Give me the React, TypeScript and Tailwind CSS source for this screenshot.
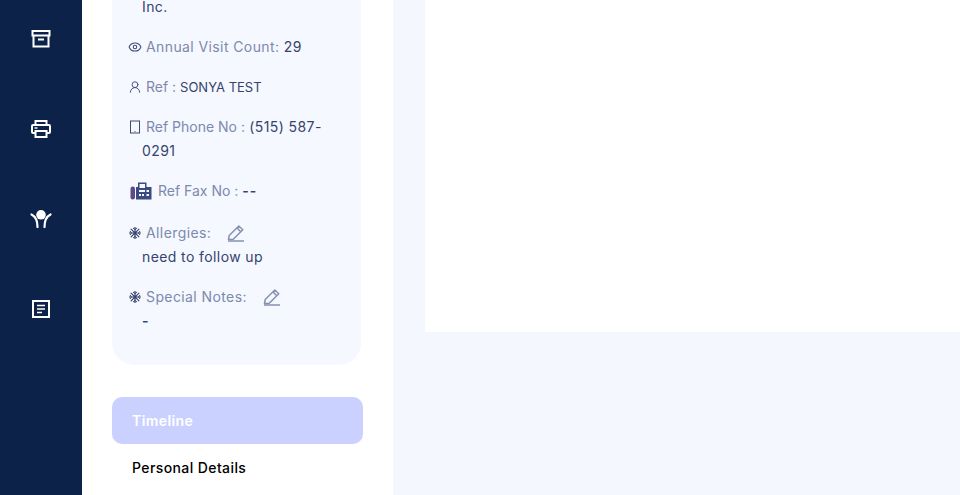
import { Eye, UserRound } from 'lucide-react';
import type { ReactNode } from 'react';

function ArchiveIcon() {
  return (
    <svg width="20" height="18" viewBox="0 0 20 18" fill="none" stroke="#fff" strokeWidth="2">
      <rect x="1.5" y="1" width="17" height="4.5" />
      <path d="M2.5 5.5V16.5H17.5V5.5" />
      <path d="M7 9.5H13" />
    </svg>
  );
}

function PrinterIcon() {
  return (
    <svg width="20" height="18" viewBox="0 0 20 18" fill="none" stroke="#fff" strokeWidth="2">
      <path d="M4.5 5V1H15.5V5" />
      <path d="M5 13H2C1.4 13 1 12.6 1 12V6C1 5.4 1.4 5 2 5H18C18.6 5 19 5.4 19 6V12C19 12.6 18.6 13 18 13H15" />
      <path d="M4.5 11H15.5V17H4.5Z" />
      <path d="M3.5 8H6.5" strokeWidth="1.4" />
    </svg>
  );
}

function PersonIcon() {
  return (
    <svg width="22" height="18" viewBox="0 0 22 18" fill="none" stroke="#fff" strokeWidth="2.2" strokeLinecap="round">
      <circle cx="11" cy="4.8" r="4.8" fill="#fff" stroke="none" />
      <path d="M1.5 4.5C4.5 6 7.5 9 7.5 17" />
      <path d="M20.5 4.5C17.5 6 14.5 9 14.5 17" />
    </svg>
  );
}

function DocIcon() {
  return (
    <svg width="18" height="18" viewBox="0 0 18 18" fill="none" stroke="#fff" strokeWidth="2">
      <rect x="1" y="1" width="16" height="16" />
      <path d="M5 5.5H13M5 9H13M5 12.5H10" strokeWidth="1.7" />
    </svg>
  );
}

function PhoneIcon() {
  return (
    <svg width="14" height="14" viewBox="0 0 14 14" fill="none" stroke="#3d4a73" strokeWidth="1">
      <rect x="2.5" y="1" width="9" height="12" />
      <path d="M6.5 11.5H7.5" stroke="#8a4a5a" />
    </svg>
  );
}

function FaxIcon() {
  return (
    <svg width="22" height="18" viewBox="0 0 22 18">
      <rect x="0.5" y="4.5" width="4.5" height="13" rx="2.2" fill="#5b4a8c" />
      <path d="M6 5H8V0.5H16.5V5H21.5V17.5H6Z" fill="#3b4a80" />
      <path d="M9.5 2H15V6H9.5Z" fill="#f5f8ff" />
      <path d="M9 8H15V10H9ZM16.5 8H19V10H16.5ZM9 12H11V14H9ZM12 12H14V14H12ZM16.5 12H19V14H16.5Z" fill="#f5f8ff" />
    </svg>
  );
}

function FlakeIcon() {
  return (
    <svg width="14" height="14" viewBox="0 0 14 14" fill="none" stroke="#35436e" strokeWidth="1.2">
      <path d="M7 1V13M1 7H13M2.8 2.8L11.2 11.2M11.2 2.8L2.8 11.2" />
      <path d="M5 2L7 3.5L9 2M5 12L7 10.5L9 12M2 5L3.5 7L2 9M12 5L10.5 7L12 9" strokeWidth="1" />
    </svg>
  );
}

function PencilIcon() {
  return (
    <svg width="18" height="17" viewBox="0 0 18 17" fill="none" stroke="#8791b0" strokeWidth="1.5" strokeLinejoin="round">
      <path d="M1.5 14.5L2.2 10.5L11.8 1L15.8 4.8L6 14.5Z" />
      <path d="M10 3L13.8 6.8" />
      <path d="M1 16H17" />
    </svg>
  );
}

function Label({ children }: { children: ReactNode }) {
  return <span className="text-[#7d89ad]">{children}</span>;
}

const navIcons = [
  <ArchiveIcon key="archive" />,
  <PrinterIcon key="printer" />,
  <PersonIcon key="person" />,
  <DocIcon key="doc" />,
];

export default function App() {
  return (
    <div className="flex h-[495px] w-[960px] overflow-hidden bg-[#f5f7ff] font-['Inter','Liberation_Sans',sans-serif] text-[14px] font-normal leading-6 tracking-[0.4px] text-[#35436e]">
      <nav className="flex w-[82px] shrink-0 flex-col items-center gap-[72px] bg-[#0c2249] pt-[30px]">
        {navIcons.map((icon, i) => (
          <div key={i} className="flex h-[18px] items-center justify-center">
            {icon}
          </div>
        ))}
      </nav>

      <aside className="w-[311px] shrink-0 bg-white pl-[30px] pr-[30px]">
        <div className="w-[249px] rounded-b-[22px] bg-[#f5f8ff] pb-[32px] pl-[16px] pr-[8px]">
          <div className="h-[14px] pl-[14px] leading-[14px]">Inc.</div>

          <div className="mt-[21px] flex items-center gap-[4px]">
            <Eye size={14} color="#3d4a73" strokeWidth={1.8} />
            <span><Label>Annual Visit Count:</Label> 29</span>
          </div>

          <div className="mt-[16px] flex items-center gap-[4px]">
            <UserRound size={14} color="#3d4a73" strokeWidth={1.6} />
            <span className="tracking-[0px]"><Label>Ref :</Label> <span className="text-[13px]">SONYA TEST</span></span>
          </div>

          <div className="mt-[16px]">
            <div className="flex items-center gap-[4px]">
              <PhoneIcon />
              <span><span className="tracking-[0px]"><Label>Ref Phone No :</Label></span> (515) 587-</span>
            </div>
            <div className="pl-[14px]">0291</div>
          </div>

          <div className="mt-[16px] flex items-center gap-[6px] pl-[2px]">
            <FaxIcon />
            <span className="tracking-[0px]"><Label>Ref Fax No :</Label> <span className="font-semibold tracking-[1px]">--</span></span>
          </div>

          <div className="mt-[18px]">
            <div className="flex items-center gap-[4px]">
              <FlakeIcon />
              <Label>Allergies:</Label>
              <span className="ml-[12px]"><PencilIcon /></span>
            </div>
            <div className="pl-[14px]">need to follow up</div>
          </div>

          <div className="mt-[16px]">
            <div className="flex items-center gap-[4px]">
              <FlakeIcon />
              <Label>Special Notes:</Label>
              <span className="ml-[12px]"><PencilIcon /></span>
            </div>
            <div className="pl-[14px] font-semibold">-</div>
          </div>
        </div>

        <div className="mt-[32px] flex h-[47px] w-[251px] items-center rounded-[10px] bg-[#cad1ff] pl-[20px] font-semibold text-white">
          Timeline
        </div>
        <div className="mt-[12px] pl-[20px] font-medium text-black">Personal Details</div>
      </aside>

      <main className="flex-1 pl-[32px]">
        <div className="h-[332px] bg-white" />
      </main>
    </div>
  );
}
